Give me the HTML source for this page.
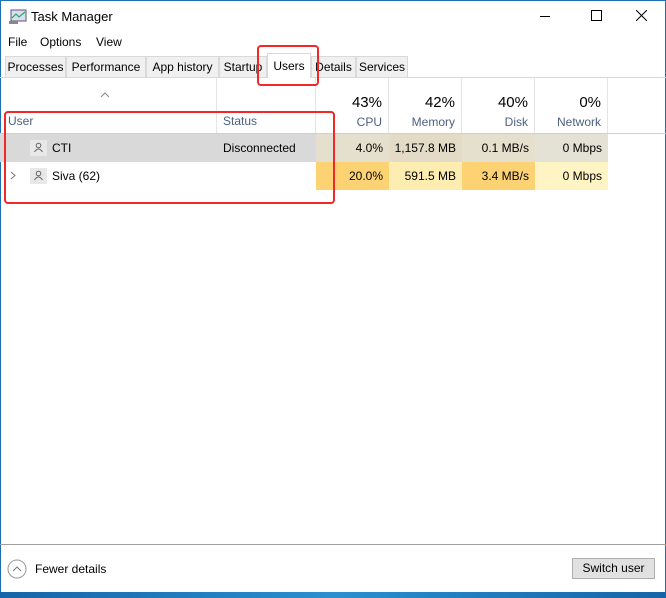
<!DOCTYPE html><html><head><style>
body{margin:0;width:666px;height:598px;position:relative;overflow:hidden;background:#fff;font-family:"Liberation Sans",sans-serif;font-size:12px;color:#000}
.a{position:absolute}
.tab{position:absolute;top:56px;height:21px;line-height:21px;border:1px solid #d9d9d9;border-bottom:none;background:#f0f0f0;text-align:center;font-size:12px;box-sizing:border-box}
.hd{position:absolute;top:78px;height:55px;border-right:1px solid #e5e5e5;box-sizing:border-box;text-align:right;padding-right:6px;color:#4d6082}
.hd b{display:block;font-weight:normal;font-size:15px;color:#000;margin-top:16px}
.hd span{display:block;margin-top:4px;font-size:12px}
.c{position:absolute;height:28px;line-height:28px;text-align:right;padding-right:6px;box-sizing:border-box}
</style></head><body>
<div class="a" style="left:0;top:0;width:1px;height:598px;background:#1a6fb5"></div>
<div class="a" style="right:0;top:0;width:1px;height:598px;background:#1a6fb5"></div>
<div class="a" style="left:0;top:0;width:666px;height:1px;background:#1a6fb5"></div>
<svg class="a" style="left:9px;top:9px" width="18" height="16"><rect x="2" y="1" width="15" height="11" fill="#dde" stroke="#557"/><polyline points="3,9 7,5 10,8 16,3" fill="none" stroke="#2a6" stroke-width="1.2"/><rect x="0" y="12" width="9" height="3" fill="#888"/></svg>
<div class="a" style="left:31px;top:9px;font-size:13px">Task Manager</div>
<div class="a" style="left:540px;top:16px;width:10px;height:1px;background:#000"></div>
<div class="a" style="left:591px;top:10px;width:9px;height:9px;border:1px solid #000"></div>
<svg class="a" style="left:636px;top:10px" width="11" height="11"><path d="M0 0L11 11M11 0L0 11" stroke="#000"/></svg>
<div class="a" style="left:8px;top:35px">File</div>
<div class="a" style="left:40px;top:35px">Options</div>
<div class="a" style="left:96px;top:35px">View</div>
<div class="a" style="left:0;top:77px;width:666px;height:1px;background:#d9d9d9"></div>
<div class="tab" style="left:5px;width:61px">Processes</div>
<div class="tab" style="left:66px;width:80px">Performance</div>
<div class="tab" style="left:146px;width:73px">App history</div>
<div class="tab" style="left:219px;width:48px">Startup</div>
<div class="tab" style="left:267px;top:53px;height:25px;width:44px;background:#fff;line-height:24px;z-index:2">Users</div>
<div class="tab" style="left:311px;width:45px">Details</div>
<div class="tab" style="left:356px;width:52px">Services</div>
<svg class="a" style="left:100px;top:92px" width="10" height="6"><path d="M1 5L5 1L9 5" fill="none" stroke="#888"/></svg>
<div class="hd" style="left:0;width:217px;text-align:left;padding-left:8px"><span style="margin-top:36px">User</span></div>
<div class="hd" style="left:217px;width:99px;text-align:left;padding-left:6px"><span style="margin-top:36px">Status</span></div>
<div class="hd" style="left:316px;width:73px"><b>43%</b><span>CPU</span></div>
<div class="hd" style="left:389px;width:73px"><b>42%</b><span>Memory</span></div>
<div class="hd" style="left:462px;width:73px"><b>40%</b><span>Disk</span></div>
<div class="hd" style="left:535px;width:73px"><b>0%</b><span>Network</span></div>
<div class="a" style="left:0;top:133px;width:666px;height:1px;background:#cfcfcf"></div>
<div class="a" style="left:0;top:134px;width:316px;height:28px;background:#d9d9d9"></div>
<div class="a" style="left:30px;top:140px;width:17px;height:16px;background:#e8e8e8"></div>
<svg class="a" style="left:33px;top:142px" width="11" height="11"><circle cx="5.5" cy="3.5" r="2.3" fill="none" stroke="#666"/><path d="M1.5 10Q5.5 4 9.5 10" fill="none" stroke="#666"/></svg>
<div class="a" style="left:52px;top:141px">CTI</div>
<div class="a" style="left:223px;top:141px">Disconnected</div>
<div class="c" style="left:316px;top:134px;width:73px;background:#e5e0cd">4.0%</div>
<div class="c" style="left:389px;top:134px;width:73px;background:#e3dbc6">1,157.8 MB</div>
<div class="c" style="left:462px;top:134px;width:73px;background:#e5e0cd">0.1 MB/s</div>
<div class="c" style="left:535px;top:134px;width:73px;background:#e4e2d4">0 Mbps</div>
<svg class="a" style="left:10px;top:171px" width="6" height="9"><path d="M1 1L5 4.5L1 8" fill="none" stroke="#777"/></svg>
<div class="a" style="left:30px;top:168px;width:17px;height:16px;background:#e8e8e8"></div>
<svg class="a" style="left:33px;top:170px" width="11" height="11"><circle cx="5.5" cy="3.5" r="2.3" fill="none" stroke="#666"/><path d="M1.5 10Q5.5 4 9.5 10" fill="none" stroke="#666"/></svg>
<div class="a" style="left:52px;top:169px">Siva (62)</div>
<div class="c" style="left:316px;top:162px;width:73px;background:#fdd272">20.0%</div>
<div class="c" style="left:389px;top:162px;width:73px;background:#fdedb0">591.5 MB</div>
<div class="c" style="left:462px;top:162px;width:73px;background:#fdd272">3.4 MB/s</div>
<div class="c" style="left:535px;top:162px;width:73px;background:#fff4c4">0 Mbps</div>
<div class="a" style="left:257px;top:45px;width:58px;height:37px;border:2px solid #f02828;border-radius:4px;z-index:3"></div>
<div class="a" style="left:4px;top:111px;width:327px;height:89px;border:2px solid #f02828;border-radius:4px;z-index:3"></div>
<div class="a" style="left:0;top:544px;width:666px;height:1px;background:#a0a0a0"></div>
<svg class="a" style="left:7px;top:559px" width="20" height="20"><circle cx="10" cy="10" r="9" fill="none" stroke="#999"/><path d="M6 12L10 8L14 12" fill="none" stroke="#777"/></svg>
<div class="a" style="left:35px;top:562px">Fewer details</div>
<div class="a" style="left:572px;top:558px;width:83px;height:21px;box-sizing:border-box;border:1px solid #adadad;background:#e1e1e1;text-align:center;line-height:19px">Switch user</div>
<div class="a" style="left:0;top:592px;width:666px;height:6px;background:linear-gradient(90deg,#1565a8,#2a8fd0,#1565a8)"></div>
</body></html>
